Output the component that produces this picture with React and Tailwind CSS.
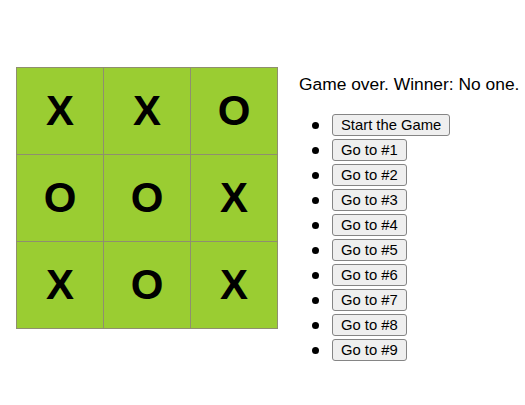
import React from "react";

const squares = ["X", "X", "O", "O", "O", "X", "X", "O", "X"];

function Square({ value }) {
  return (
    <button className="-mr-px -mt-px flex h-[88px] w-[88px] items-center justify-center border border-[#8f8f6f] bg-[#9acd32] p-0 text-[42px] font-bold leading-none text-black">
      {value}
    </button>
  );
}

function Board() {
  return (
    <div className="flex flex-col pt-px">
      {[0, 1, 2].map((row) => (
        <div key={row} className="flex">
          {[0, 1, 2].map((col) => (
            <Square key={col} value={squares[row * 3 + col]} />
          ))}
        </div>
      ))}
    </div>
  );
}

export default function App() {
  const moves = ["Start the Game", ...Array.from({ length: 9 }, (_, i) => `Go to #${i + 1}`)];
  return (
    <div
      className="flex min-h-[405px] bg-white pl-[16px] pt-[67px] text-black"
      style={{ fontFamily: '"Liberation Sans", Arial, sans-serif' }}
    >
      <Board />
      <div className="ml-[22px] mt-[8px]">
        <div className="text-[17.4px] leading-[19.5px]">Game over. Winner: No one.</div>
        <ul className="mt-[17px] list-disc pl-[33px] text-[17px] marker:text-[22px]">
          {moves.map((label) => (
            <li key={label} className="h-[25.1px] leading-[25px]">
              <button className="h-[22px] rounded-[3px] border border-[#858585] bg-[#efefef] px-[8px] align-top text-[14.8px] leading-[20px] text-black">
                {label}
              </button>
            </li>
          ))}
        </ul>
      </div>
    </div>
  );
}
